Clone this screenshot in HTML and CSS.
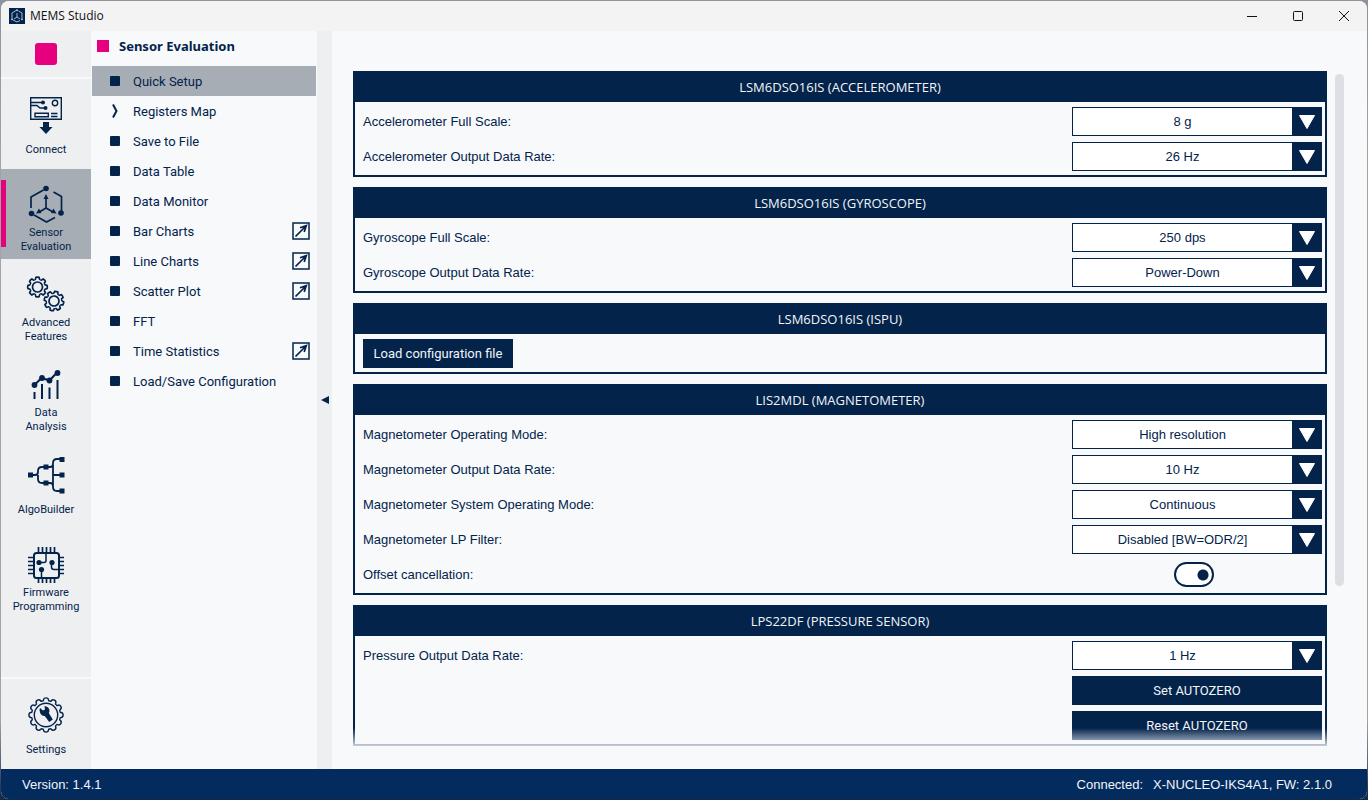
FILE: index.html
```html
<!DOCTYPE html>
<html lang="en">
<head>
<meta charset="utf-8">
<title>MEMS Studio</title>
<link rel="stylesheet" href="styles.css">
</head>
<body>
<svg class="defs" aria-hidden="true">
  <symbol id="popout" viewBox="0 0 18 18"><rect x="1" y="1" width="16" height="16" fill="none" stroke="currentColor" stroke-width="1.5"/><path d="M3.500 14.500 14 4M8 5.800 14.300 3.700 12.200 10" fill="none" stroke="currentColor" stroke-width="1.700"/></symbol>
  <symbol id="arrow" viewBox="0 0 30 29"><path d="M7.500 8.500h15L15 21.500z" fill="#fff" stroke="#fff" stroke-width="1" stroke-linejoin="round"/></symbol>
  <g id="tooth8"><path d="M-3.06-7.39Q-2-7.2-1.9-8.4L-1.6-9.6Q0-10.1 1.6-9.6L1.9-8.4Q2-7.2 3.06-7.39"/></g>
  <g id="gear8"><circle r="5"/><use href="#tooth8"/><use href="#tooth8" transform="rotate(45)"/><use href="#tooth8" transform="rotate(90)"/><use href="#tooth8" transform="rotate(135)"/><use href="#tooth8" transform="rotate(180)"/><use href="#tooth8" transform="rotate(225)"/><use href="#tooth8" transform="rotate(270)"/><use href="#tooth8" transform="rotate(315)"/></g>
  <g id="tooth12"><path d="M-3.83-14.3Q-2.6-13.6-2.5-15Q-2.3-17.1 0-17.1Q2.3-17.1 2.5-15Q2.6-13.6 3.83-14.3"/></g>
  <g id="half12"><use href="#tooth12"/><use href="#tooth12" transform="rotate(30)"/><use href="#tooth12" transform="rotate(60)"/><use href="#tooth12" transform="rotate(90)"/><use href="#tooth12" transform="rotate(120)"/><use href="#tooth12" transform="rotate(150)"/></g>
</svg>
<div class="window">
  <header class="titlebar">
    <svg class="app-icon" viewBox="0 0 16 16"><path fill="#03234b" d="M0 0h16v16H0z"/><path d="M3 10V5l4-2.500M9.500 3 13 5v5M4 12l4 2 3-1.500M8 5v4l-3 2M8 9l3 2" fill="none" stroke="#b9cbe0" stroke-width=".9"/><circle cx="8" cy="2.300" r="1" fill="#b9cbe0"/><circle cx="3" cy="11.300" r="1" fill="#b9cbe0"/><circle cx="13" cy="11.300" r="1" fill="#b9cbe0"/></svg>
    <span class="app-name">MEMS Studio</span>
    <div class="caption">
      <button aria-label="Minimize"><svg viewBox="0 0 12 12"><path d="M1 6.500h10"/></svg></button>
      <button aria-label="Maximize"><svg viewBox="0 0 12 12"><rect x="1.500" y="1.500" width="9" height="9" rx="1"/></svg></button>
      <button aria-label="Close"><svg viewBox="0 0 12 12"><path d="M1 1 11 11M11 1 1 11"/></svg></button>
    </div>
  </header>
  <div class="body">
    <aside class="sidebar">
      <div class="record"><button class="stop" aria-label="Stop"></button></div>
      <button class="tool">
        <svg viewBox="0 0 36 36"><g fill="none" stroke="currentColor" stroke-width="1.400"><path d="M2.700.700h30.600v21.600H2.700zM7 16.200h13.300v3.600H7zM23 16.500h6.500M23 19.500h6.500M3 5.500h11.500M3 8.500h6l3 2.500h5"/><circle cx="27" cy="6" r="2.700"/></g><circle cx="15" cy="5.500" r="2" fill="currentColor"/><circle cx="17.500" cy="11" r="2" fill="currentColor"/><path d="M15 25h6v5h3.500L18 37l-6.500-7H15z" fill="currentColor"/></svg>
        <span>Connect</span>
      </button>
      <button class="tool active">
        <svg viewBox="0 0 36 36"><g fill="none" stroke="currentColor" stroke-width="1.700"><path d="M15.500 3 3 10v11M25.500 5 33.500 9.500V25M6 28l12.500 7 8.500-4.500M18 10v11l-7.500 4.500M18 21l8 4.500"/></g><g fill="currentColor"><circle cx="18" cy="1.500" r="2.800"/><circle cx="3.500" cy="26.500" r="2.800"/><circle cx="33" cy="26" r="2.800"/><path d="m18 7-2.500 5h5zM8 26.500l3-5 2.500 4.500zM28.500 26.500l-3-5-2.500 4.500z"/></g></svg>
        <span>Sensor<br>Evaluation</span>
      </button>
      <button class="tool">
        <svg viewBox="0 0 36 36"><g fill="none" stroke="currentColor" stroke-width="1.700"><use href="#gear8" transform="translate(9.500 10)"/><use href="#gear8" transform="translate(26 24) rotate(14)"/></g></svg>
        <span>Advanced<br>Features</span>
      </button>
      <button class="tool">
        <svg viewBox="0 0 36 36"><g fill="none" stroke="currentColor" stroke-width="2"><path d="m6.500 18 7-7 8 2.500 7.500-8M6.500 25v7M14 17v15M21.500 20.500V32M29.500 13v19"/></g><g fill="currentColor"><circle cx="6.500" cy="18" r="2.900"/><circle cx="14" cy="11" r="2.900"/><circle cx="21.500" cy="13.500" r="2.900"/><circle cx="29.500" cy="6" r="2.900"/></g></svg>
        <span>Data<br>Analysis</span>
      </button>
      <button class="tool">
        <svg viewBox="0 0 36 36"><path d="M3 18h4q3 0 3-3v-1q0-4 4-4h8q3 0 3-3V6q0-4 4-4h5M10 18v4q0 4 4 4h8q3 0 3 3v1q0 4 4 4h5M25 8v20M25 18h9" fill="none" stroke="currentColor" stroke-width="1.800"/><path d="M0 15.500h5v5H0zM15.500 7.500h5v5h-5zM15.500 23.500h5v5h-5zM31.500 0h5v5h-5zM31.500 15.500h5v5h-5zM31.500 31.500h5v5h-5z" fill="currentColor"/></svg>
        <span>AlgoBuilder</span>
      </button>
      <button class="tool">
        <svg viewBox="0 0 36 36"><g fill="none" stroke="currentColor" stroke-width="2"><rect x="6" y="6" width="25" height="25" rx="2.500"/><path d="M10.500 0v6M14.500 0v6M18.500 0v6M22.500 0v6M26.500 0v6M10.500 31v5M14.500 31v5M18.500 31v5M22.500 31v5M26.500 31v5M0 10.500h6M0 14.500h6M0 18.500h6M0 22.500h6M0 26.500h6M31 10.500h5M31 14.500h5M31 18.500h5M31 22.500h5M31 26.500h5" stroke-width="1.700"/><path d="M11 15.500h5q2 0 2-2V6M13.500 22v9M23.500 15v5q0 2.500 2.500 2.500h5" stroke-width="1.500"/></g><g fill="currentColor"><circle cx="11" cy="15.500" r="2.600"/><circle cx="24" cy="15.500" r="2.600"/><circle cx="13.500" cy="22.500" r="2.600"/></g></svg>
        <span>Firmware<br>Programming</span>
      </button>
      <button class="tool settings">
        <svg viewBox="0 0 36 36"><g transform="translate(18 18)" fill="none" stroke="currentColor" stroke-width="1.400"><circle r="11.700"/><use href="#half12"/><use href="#half12" transform="rotate(180)"/></g><path d="M12 15.500q-1-3 0-4.500l3 2.500 2-1-.5-3.500q4 .5 4.800 3.500.5 2-.5 3.500l4 6.500-3.600 2.600-4.400-6.200q-3.500.3-4.800-3.400z" fill="currentColor"/></svg>
        <span>Settings</span>
      </button>
    </aside>
    <nav class="nav">
      <h1>Sensor Evaluation</h1>
      <ul>
        <li><a class="selected" href="#"><i class="dot"></i>Quick Setup</a></li>
        <li><a href="#"><svg class="chevron" viewBox="0 0 10 16"><path d="M3 1.500 6.500 8 3 14.500" fill="none" stroke="currentColor" stroke-width="2"/></svg>Registers Map</a></li>
        <li><a href="#"><i class="dot"></i>Save to File</a></li>
        <li><a href="#"><i class="dot"></i>Data Table</a></li>
        <li><a href="#"><i class="dot"></i>Data Monitor</a></li>
        <li><a href="#"><i class="dot"></i>Bar Charts<svg class="popout"><use href="#popout"/></svg></a></li>
        <li><a href="#"><i class="dot"></i>Line Charts<svg class="popout"><use href="#popout"/></svg></a></li>
        <li><a href="#"><i class="dot"></i>Scatter Plot<svg class="popout"><use href="#popout"/></svg></a></li>
        <li><a href="#"><i class="dot"></i>FFT</a></li>
        <li><a href="#"><i class="dot"></i>Time Statistics<svg class="popout"><use href="#popout"/></svg></a></li>
        <li><a href="#"><i class="dot"></i>Load/Save Configuration</a></li>
      </ul>
    </nav>
    <button class="splitter" aria-label="Collapse panel"><svg viewBox="0 0 8 8"><path d="M0 4 8 0v8z" fill="currentColor"/></svg></button>
    <main class="content">
      <div class="panels">
        <section class="panel">
          <h2>LSM6DSO16IS (ACCELEROMETER)</h2>
          <div class="rows">
            <div class="row"><label for="afs">Accelerometer Full Scale:</label><div class="control"><select id="afs"><option>8 g</option></select><svg><use href="#arrow"/></svg></div></div>
            <div class="row"><label for="aodr">Accelerometer Output Data Rate:</label><div class="control"><select id="aodr"><option>26 Hz</option></select><svg><use href="#arrow"/></svg></div></div>
          </div>
        </section>
        <section class="panel">
          <h2>LSM6DSO16IS (GYROSCOPE)</h2>
          <div class="rows">
            <div class="row"><label for="gfs">Gyroscope Full Scale:</label><div class="control"><select id="gfs"><option>250 dps</option></select><svg><use href="#arrow"/></svg></div></div>
            <div class="row"><label for="godr">Gyroscope Output Data Rate:</label><div class="control"><select id="godr"><option>Power-Down</option></select><svg><use href="#arrow"/></svg></div></div>
          </div>
        </section>
        <section class="panel">
          <h2>LSM6DSO16IS (ISPU)</h2>
          <div class="rows">
            <div class="row"><button class="action load">Load configuration file</button></div>
          </div>
        </section>
        <section class="panel">
          <h2>LIS2MDL (MAGNETOMETER)</h2>
          <div class="rows">
            <div class="row"><label for="mom">Magnetometer Operating Mode:</label><div class="control"><select id="mom"><option>High resolution</option></select><svg><use href="#arrow"/></svg></div></div>
            <div class="row"><label for="modr">Magnetometer Output Data Rate:</label><div class="control"><select id="modr"><option>10 Hz</option></select><svg><use href="#arrow"/></svg></div></div>
            <div class="row"><label for="msom">Magnetometer System Operating Mode:</label><div class="control"><select id="msom"><option>Continuous</option></select><svg><use href="#arrow"/></svg></div></div>
            <div class="row"><label for="mlp">Magnetometer LP Filter:</label><div class="control"><select id="mlp"><option>Disabled [BW=ODR/2]</option></select><svg><use href="#arrow"/></svg></div></div>
            <div class="row"><label for="off">Offset cancellation:</label><div class="control toggle"><input id="off" type="checkbox" role="switch" checked></div></div>
          </div>
        </section>
        <section class="panel">
          <h2>LPS22DF (PRESSURE SENSOR)</h2>
          <div class="rows">
            <div class="row"><label for="podr">Pressure Output Data Rate:</label><div class="control"><select id="podr"><option>1 Hz</option></select><svg><use href="#arrow"/></svg></div></div>
            <div class="row end"><button class="action wide">Set AUTOZERO</button></div>
            <div class="row end"><button class="action wide">Reset AUTOZERO</button></div>
          </div>
        </section>
        <div class="fade"></div>
      </div>
      <div class="scroll"><div class="thumb"></div></div>
    </main>
  </div>
  <footer class="status"><span>Version: 1.4.1</span><span class="conn">Connected:</span><span>X-NUCLEO-IKS4A1, FW: 2.1.0</span></footer>
</div>
</body>
</html>
```

FILE: styles.css
```css
:root {
  --navy: #03234b;
  --pink: #e6007e;
  --paper: #f7f9fb;
  --grey: #eeeff0;
  --active: #a6adb5;
  --ui: Roboto, "Noto Sans", sans-serif;
  --wide: "Noto Sans", "Open Sans", sans-serif;
  --arial: "Liberation Sans", Arial, sans-serif;
}
* { box-sizing: border-box; }
body {
  margin: 0;
  height: 100vh;
  padding: 1px;
  background: linear-gradient(#8d929d, #a3a3a5 20%, #a3a3a5 90%, #12284a);
  font: 13px/17px var(--ui);
  color: var(--navy);
}
button { font: inherit; color: inherit; border: 0; padding: 0; background: none; }
.defs { display: block; width: 0; height: 0; position: absolute; }
.window {
  height: 100%;
  display: flex;
  flex-direction: column;
  border-radius: 8px;
  overflow: hidden;
  background: var(--paper);
}
.titlebar {
  flex: none;
  height: 30px;
  display: flex;
  align-items: center;
  padding-left: 8px;
  background: #f3f3f3;
  color: #111;
  font: 12px/16px "Open Sans", sans-serif;
}
.app-icon { width: 16px; height: 16px; margin-right: 5px; }
.caption { margin-left: auto; display: flex; }
.caption button { width: 46px; height: 30px; display: grid; place-items: center; }
.caption svg { width: 12px; height: 12px; fill: none; stroke: #111; }

.body { flex: 1; min-height: 0; display: flex; }
.sidebar {
  flex: none;
  width: 90px;
  display: flex;
  flex-direction: column;
  background: var(--grey);
}
.record {
  height: 48px;
  border-bottom: 2px solid var(--paper);
  display: grid;
  place-items: center;
}
.stop { width: 22px; height: 22px; border-radius: 3px; background: var(--pink); }
.tool {
  flex: none;
  height: 90px;
  display: flex;
  flex-direction: column;
  align-items: center;
  padding-top: 18px;
  font-size: 11px;
  line-height: 14px;
}
.tool svg { width: 36px; height: 36px; overflow: visible; }
.tool span { height: 28px; margin-top: 3px; display: grid; align-content: center; text-align: center; }
.tool.active {
  background: var(--active) linear-gradient(var(--pink), var(--pink)) no-repeat 0 11px / 5px 67px;
}
.settings { margin-top: auto; height: 92px; border-top: 2px solid var(--paper); }

.nav { flex: none; width: 226px; padding: 0 1px; }
.nav h1 {
  margin: 0 0 5px;
  height: 30px;
  padding-left: 5px;
  display: flex;
  align-items: center;
  gap: 10px;
  font: bold 13px/16px var(--wide);
}
.nav h1::before { content: ""; width: 12px; height: 12px; background: var(--pink); }
.nav ul { margin: 0; padding: 0; list-style: none; }
.nav a {
  height: 30px;
  padding: 0 6px 0 18px;
  display: flex;
  align-items: center;
  color: inherit;
  text-decoration: none;
}
.nav .selected { background: var(--active); }
.dot { width: 10px; height: 10px; margin-right: 13px; border-radius: 1px; background: var(--navy); }
.chevron { width: 10px; height: 16px; margin-right: 13px; }
.popout { width: 18px; height: 18px; margin-left: auto; }
.splitter { flex: none; width: 15px; background: var(--grey); display: grid; place-items: center; }
.splitter svg { width: 8px; height: 8px; }

.content { flex: 1; min-width: 0; display: flex; padding: 40px 23px 23px 21px; }
.panels {
  flex: 1;
  position: relative;
  display: flex;
  flex-direction: column;
  gap: 10px;
  overflow: hidden;
}
.panel { flex: none; border: 2px solid var(--navy); }
.panel h2 {
  margin: 0;
  height: 29px;
  background: var(--navy);
  color: #f1f4f8;
  font: 13px/29px "Open Sans", sans-serif;
  text-align: center;
}
.rows { padding: 5px 3px 4px 8px; display: flex; flex-direction: column; gap: 6px; }
.row { height: 29px; display: flex; align-items: center; justify-content: space-between; font-family: var(--arial); }
.row.end { justify-content: flex-end; }
.control { position: relative; width: 250px; height: 29px; }
.control select {
  appearance: none;
  width: 100%;
  height: 100%;
  margin: 0;
  padding: 0 29px 0 0;
  border: 1px solid var(--navy);
  border-radius: 0;
  background: #fff;
  color: var(--navy);
  font: 13px var(--arial);
  text-align: center;
  text-align-last: center;
}
.control svg {
  position: absolute;
  top: 0;
  right: 0;
  width: 30px;
  height: 29px;
  background: var(--navy);
  pointer-events: none;
}
.toggle { display: grid; place-items: center; padding-right: 6px; }
.toggle input {
  appearance: none;
  width: 40px;
  height: 25px;
  margin: 0;
  border: 2px solid var(--navy);
  border-radius: 13px;
  background: radial-gradient(circle at 27px 11px, var(--navy) 5px, #fff 6px);
}
.action { height: 29px; background: var(--navy); color: #f1f4f8; font-family: var(--ui); }
.load { width: 150px; }
.wide { width: 250px; }
.fade {
  position: absolute;
  inset: auto 0 0 0;
  height: 18px;
  background: linear-gradient(#f7f9fb00, #f7f9fbcc);
}
.scroll { flex: none; width: 17px; padding: 3px 0 0 8px; }
.thumb { height: 512px; max-height: 100%; border-radius: 5px; background: #dcdfe4; }

.status {
  flex: none;
  height: 30px;
  display: flex;
  align-items: center;
  gap: 10px;
  padding: 0 35px 0 21px;
  background: #032b5d;
  color: #f1f4f8;
  font-family: var(--arial);
}
.conn { margin-left: auto; }
```
